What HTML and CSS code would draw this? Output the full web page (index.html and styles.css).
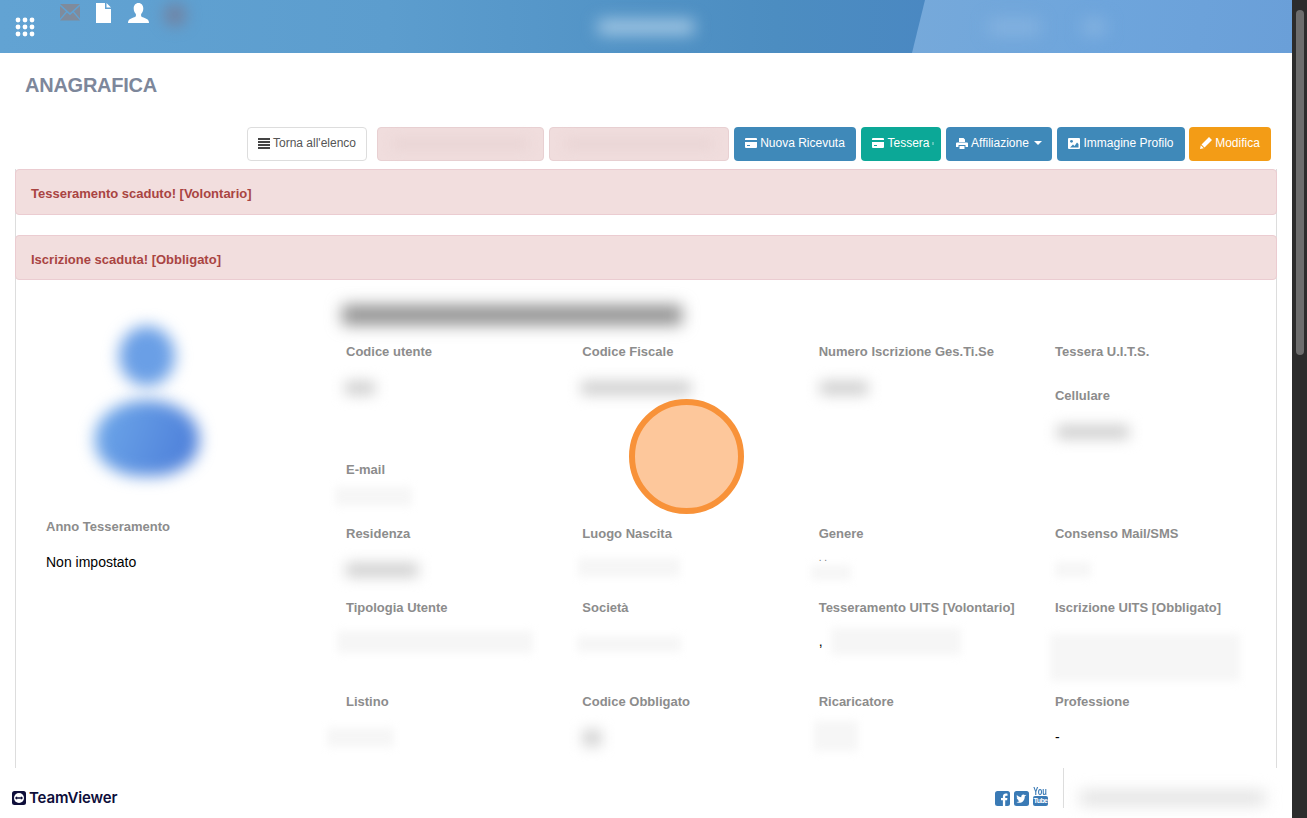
FILE: index.html
```html
<!DOCTYPE html>
<html lang="it">
<head>
  <meta charset="UTF-8">
  <title>Anagrafica</title>
  <link rel="stylesheet" href="styles.css">
</head>
<body>
  <div class="window">
    <div class="page">
      <header class="topbar">
        <div class="topbar-slant"></div>
        <svg class="apps" viewBox="0 0 20 20" width="20" height="20" fill="#fff">
          <circle cx="3" cy="3" r="2.400"/><circle cx="10" cy="3" r="2.400"/><circle cx="17" cy="3" r="2.400"/>
          <circle cx="3" cy="10" r="2.400"/><circle cx="10" cy="10" r="2.400"/><circle cx="17" cy="10" r="2.400"/>
          <circle cx="3" cy="17" r="2.400"/><circle cx="10" cy="17" r="2.400"/><circle cx="17" cy="17" r="2.400"/>
        </svg>
        <div class="topbar-icons">
          <svg viewBox="0 0 20 17" width="20" height="17" fill="#7f8b9c">
            <path d="M0 0h20L10 9z"/><path d="M0 2l6 5.500L0 14.500z"/><path d="M20 2l-6 5.500 6 7z"/><path d="M7 8.500l3 2.700 3-2.700 7 8H0z"/>
          </svg>
          <svg viewBox="0 0 15 20" width="15" height="20" fill="#fff">
            <path d="M0 0h9v6h6v14H0z"/><path d="M10.500 0L15 4.500h-4.500z"/>
          </svg>
          <svg class="icon-user" viewBox="0 0 21 20" width="21" height="20" fill="#fff">
            <path d="M10.500 0c3 0 4.800 2.400 4.800 5.500 0 2.300-1 4.300-2.200 5.500v2c0 1 4.500 2 6.500 3.500 1 .8 1.400 2 1.400 3.500H0c0-1.500.4-2.700 1.400-3.500 2-1.500 6.500-2.500 6.500-3.500v-2C6.700 9.800 5.700 7.800 5.700 5.500 5.700 2.400 7.500 0 10.500 0z"/>
          </svg>
          <span class="topbar-smudge"></span>
        </div>
        <span class="topbar-name"></span>
        <div class="topbar-user">
          <span class="user-a"></span>
          <span class="user-b"></span>
        </div>
      </header>

      <h1 class="page-title">ANAGRAFICA</h1>

      <div class="toolbar">
        <a class="btn btn-default">
          <svg viewBox="0 0 12 11" width="12" height="11" fill="#444"><path d="M0 0h12v2H0zM0 3h12v2H0zM0 6h12v2H0zM0 9h12v2H0z"/></svg>
          Torna all'elenco
        </a>
        <a class="btn btn-hidden btn-hidden-a"><span></span></a>
        <a class="btn btn-hidden btn-hidden-b"><span></span></a>
        <a class="btn btn-blue btn-ricevuta">
          <svg viewBox="0 0 12 10" width="12" height="10" fill="#fff"><path d="M1 0h10a1 1 0 0 1 1 1v1H0V1a1 1 0 0 1 1-1zM0 4h12v5a1 1 0 0 1-1 1H1a1 1 0 0 1-1-1zm2 3v1h3V7z"/></svg>
          Nuova Ricevuta
        </a>
        <a class="btn btn-teal">
          <svg viewBox="0 0 12 10" width="12" height="10" fill="#fff"><path d="M1 0h10a1 1 0 0 1 1 1v1H0V1a1 1 0 0 1 1-1zM0 4h12v5a1 1 0 0 1-1 1H1a1 1 0 0 1-1-1zm2 3v1h3V7z"/></svg>
          Tessera<i class="teal-dot"></i>
        </a>
        <a class="btn btn-blue btn-affiliazione">
          <svg viewBox="0 0 12 11" width="12" height="11" fill="#fff"><path d="M3 0h4.500L9 1.500V4H3zM1 4.500h10a1 1 0 0 1 1 1V9H9.500V7h-7v2H0V5.500a1 1 0 0 1 1-1zM3.500 8h5v3h-5z"/></svg>
          Affiliazione <i class="caret"></i>
        </a>
        <a class="btn btn-blue btn-immagine">
          <svg viewBox="0 0 12 11" width="12" height="11"><rect width="12" height="11" rx="1" fill="#fff"/><circle cx="3.500" cy="3.300" r="1.400" fill="#3f89b9"/><path d="M2 9.500l3-3 1.500 1.500L9 4.500l1.500 1.500v3.500z" fill="#3f89b9"/></svg>
          Immagine Profilo
        </a>
        <a class="btn btn-orange">
          <svg viewBox="0 0 12 12" width="12" height="12" fill="#fff"><path d="M9 0l3 3-7.500 7.500-3-3zM.8 8.200l3 3L0 12z"/></svg>
          Modifica
        </a>
      </div>

      <section class="panel">
        <div class="alert alert-first"><strong>Tesseramento scaduto! [Volontario]</strong></div>
        <div class="alert"><strong>Iscrizione scaduta! [Obbligato]</strong></div>

        <div class="detail">
          <div class="side">
            <div class="avatar">
              <span class="avatar-head"></span>
              <span class="avatar-body"></span>
            </div>
            <div class="label">Anno Tesseramento</div>
            <div class="side-value">Non impostato</div>
          </div>

          <div class="name-row"><span class="smudge name"></span></div>

          <div class="field"><div class="label">Codice utente</div><span class="smudge dark v-codice"></span></div>
          <div class="field"><div class="label">Codice Fiscale</div><span class="smudge dark v-cf"></span></div>
          <div class="field"><div class="label">Numero Iscrizione Ges.Ti.Se</div><span class="smudge dark v-numero"></span></div>
          <div class="field">
            <div class="label">Tessera U.I.T.S.</div>
            <div class="label label-next">Cellulare</div>
            <span class="smudge dark v-cellulare"></span>
          </div>

          <div class="field field-wide"><div class="label">E-mail</div><span class="smudge pale v-email"></span></div>

          <div class="field"><div class="label">Residenza</div><span class="smudge dark v-residenza"></span></div>
          <div class="field"><div class="label">Luogo Nascita</div><span class="smudge pale v-luogo"></span></div>
          <div class="field"><div class="label">Genere</div><div class="dots">. .</div><span class="smudge pale v-genere"></span></div>
          <div class="field"><div class="label">Consenso Mail/SMS</div><span class="smudge pale v-consenso"></span></div>

          <div class="field"><div class="label">Tipologia Utente</div><span class="smudge pale v-tipologia"></span></div>
          <div class="field"><div class="label">Società</div><span class="smudge pale v-societa"></span></div>
          <div class="field">
            <div class="label">Tesseramento UITS [Volontario]</div>
            <div class="comma-row"><span class="comma">,</span><span class="smudge pale v-tess"></span></div>
          </div>
          <div class="field"><div class="label">Iscrizione UITS [Obbligato]</div><span class="smudge pale v-iscr"></span></div>

          <div class="field"><div class="label">Listino</div><span class="smudge pale v-listino"></span></div>
          <div class="field"><div class="label">Codice Obbligato</div><span class="smudge dark v-obbl"></span></div>
          <div class="field"><div class="label">Ricaricatore</div><span class="smudge pale v-ricar"></span></div>
          <div class="field"><div class="label">Professione</div><div class="dash">-</div></div>
        </div>
      </section>

      <footer class="footer">
        <div class="tv-logo">
          <svg viewBox="0 0 14 14" width="14" height="14">
            <rect width="14" height="14" rx="2.500" fill="#0e0e3a"/>
            <circle cx="7" cy="7" r="5" fill="#fff"/>
            <path d="M2.800 7l2.300-1.700v1h3.800v-1L11.200 7 8.900 8.700v-1H5.100v1z" fill="#0e0e3a"/>
          </svg>
          <span>TeamViewer</span>
        </div>
        <div class="social">
          <svg viewBox="0 0 15 15" width="15" height="15">
            <rect width="15" height="15" rx="2.500" fill="#3a7ab5"/>
            <path d="M10.200 15V9.300h1.900l.3-2.200h-2.200V5.700c0-.6.200-1 1.100-1h1.200v-2c-.2 0-.9-.1-1.700-.1-1.700 0-2.900 1-2.900 2.900v1.600H6v2.200h1.900V15z" fill="#fff"/>
          </svg>
          <svg viewBox="0 0 15 15" width="15" height="15">
            <rect width="15" height="15" rx="2.500" fill="#3a7ab5"/>
            <path d="M12.500 4.600c-.4.200-.8.300-1.200.3.400-.3.800-.7.900-1.100-.4.200-.9.400-1.300.5a2.100 2.100 0 0 0-3.600 1.900C5.600 6.100 4 5.300 3 4c-.6 1-.3 2.200.6 2.800-.3 0-.6-.1-.9-.3 0 1 .7 1.900 1.700 2.100-.3.100-.6.100-.9 0 .3.900 1.100 1.400 2 1.500-.9.700-2 1-3 .9 3.100 2 8.300.6 8.300-5.700.3-.2.700-.5.700-.7z" fill="#fff"/>
          </svg>
          <div class="yt">
            <span class="yt-you">You</span>
            <span class="yt-tube">Tube</span>
          </div>
        </div>
        <div class="footer-rule"></div>
        <span class="footer-smudge"></span>
      </footer>

      <div class="click-mark"></div>
    </div>
    <div class="scrollbar"><div class="scrollbar-thumb"></div></div>
  </div>
</body>
</html>
```

FILE: styles.css
```css
* {
  box-sizing: border-box;
}
html, body {
  margin: 0;
  height: 100%;
  overflow: hidden;
}
body {
  font-family: "Liberation Sans", Arial, sans-serif;
  font-size: 14px;
  background-color: #fff;
  color: #000;
}
.window {
  display: flex;
  height: 818px;
}
.page {
  position: relative;
  flex: 1;
  overflow: hidden;
  background-color: #fff;
}

/* Scrollbar */
.scrollbar {
  width: 15px;
  padding: 10px 3px 0 4px;
  background-color: #2c2c2c;
}
.scrollbar-thumb {
  height: 345px;
  border-radius: 4px;
  background-color: #6d6d6d;
}

/* Top bar */
.topbar {
  position: relative;
  display: flex;
  height: 53px;
  overflow: hidden;
  background: linear-gradient(90deg, #62a3d3 0%, #5c9dce 30%, #4c8dc1 60%, #4a88c2 72%);
}
.topbar-slant {
  position: absolute;
  top: 0;
  right: 0;
  bottom: 0;
  left: 912px;
  clip-path: polygon(13px 0, 100% 0, 100% 100%, 0 100%);
  background: linear-gradient(100deg, #76a9da 0%, #6ea5dc 50%, #6a9fd8 100%);
}
.apps {
  margin: 17px 0 0 15px;
}
.topbar-icons {
  display: flex;
  gap: 16px;
  align-items: flex-start;
  margin: 3px 0 0 25px;
}
.topbar-icons svg:first-child {
  margin-top: 1px;
}
.icon-user {
  margin-left: 1px;
}
.topbar-smudge {
  width: 24px;
  height: 24px;
  margin-left: -2px;
  border-radius: 50%;
  background-color: #6f86a8;
  filter: blur(7px);
}
.topbar-name {
  position: absolute;
  top: 20px;
  left: 598px;
  width: 96px;
  height: 14px;
  background-color: #a8cbe6;
  filter: blur(8px);
}
.topbar-user {
  position: absolute;
  top: 19px;
  left: 988px;
  display: flex;
  gap: 42px;
}
.user-a, .user-b {
  height: 16px;
  background-color: #84b2e0;
  filter: blur(8px);
}
.user-a {
  width: 52px;
}
.user-b {
  width: 24px;
}

/* Title */
.page-title {
  margin: 20px 0 0 25px;
  font-size: 20px;
  line-height: 24px;
  font-weight: bold;
  letter-spacing: -0.25px;
  color: #7d879b;
}

/* Buttons */
.toolbar {
  display: flex;
  justify-content: flex-end;
  height: 34px;
  margin: 30px 21px 8px 0;
}
.btn {
  display: flex;
  gap: 3px;
  align-items: center;
  justify-content: center;
  height: 34px;
  margin-left: 5px;
  padding-bottom: 2px;
  border: 1px solid transparent;
  border-radius: 4px;
  font-size: 12px;
  color: #fff;
  white-space: nowrap;
}
.btn-default {
  width: 120px;
  margin-right: 5px;
  border-color: #ddd;
  color: #555;
}
.btn-hidden {
  padding-bottom: 0;
  border-color: #e8d0d2;
  background-color: #f0dddd;
}
.btn-hidden span {
  width: 82%;
  height: 10px;
  background-color: #e8d4d4;
  filter: blur(6px);
}
.btn-hidden-a {
  width: 167px;
}
.btn-hidden-b {
  width: 180px;
}
.btn-blue {
  background-color: #3f89b9;
}
.btn-ricevuta {
  width: 122px;
}
.btn-affiliazione {
  width: 106px;
}
.btn-immagine {
  width: 128px;
}
.btn-teal {
  width: 80px;
  padding-left: 4px;
  background-color: #0ca897;
}
.teal-dot {
  width: 2px;
  height: 3px;
  margin-left: -1px;
  background-color: #5cc4b8;
}
.btn-orange {
  width: 82px;
  margin-left: 4px;
  background-color: #f39c16;
}
.caret {
  width: 0;
  height: 0;
  margin-left: 2px;
  border-top: 4px solid #fff;
  border-right: 4px solid transparent;
  border-left: 4px solid transparent;
}

/* Panel and alerts */
.panel {
  height: 700px;
  margin: 0 15px;
  border-right: 1px solid #ddd;
  border-left: 1px solid #ddd;
}
.alert {
  height: 45px;
  margin: 0 -1px;
  padding: 0 15px;
  border: 1px solid #ebccd1;
  border-radius: 4px;
  background-color: #f2dede;
  font-size: 13px;
  line-height: 46px;
  color: #a94442;
}
.alert strong {
  display: block;
  padding-top: 1px;
}
.alert-first {
  height: 46px;
  margin-bottom: 20px;
}

/* Detail grid */
.detail {
  display: grid;
  grid-template-columns: 330px 236.33px 236.33px 236.33px 1fr;
  grid-template-rows: 61px 118px 64px 74px 94px 80px;
}
.side {
  grid-column: 1;
  grid-row: 1 / span 6;
  padding: 40px 0 0 30px;
}
.avatar {
  display: flex;
  flex-direction: column;
  align-items: center;
  width: 202px;
  height: 196px;
}
.avatar-head {
  width: 56px;
  height: 60px;
  margin-top: 6px;
  border-radius: 50%;
  background-color: #6a9fe6;
  filter: blur(8px);
}
.avatar-body {
  width: 104px;
  height: 76px;
  margin-top: 14px;
  border-radius: 50% 50% 45% 45%;
  background: linear-gradient(110deg, #6fa9ea, #4a7bd8);
  filter: blur(8px);
}
.side-value {
  margin-top: 16px;
  line-height: 20px;
}
.label {
  margin-bottom: -1px;
  padding-top: 1px;
  font-size: 13px;
  line-height: 20px;
  font-weight: bold;
  color: #8c8c8c;
}
.label-next {
  margin-top: 24px;
}
.name-row {
  grid-column: 2 / span 4;
}
.field-wide {
  grid-column: 2 / span 4;
}
.smudge {
  display: block;
}
.smudge.dark {
  background-color: #cfcfcf;
  filter: blur(7px);
}
.smudge.pale {
  background-color: #f6f6f6;
  filter: blur(4px);
}
.name {
  width: 340px;
  height: 20px;
  margin: 25px 0 0 -4px;
  background-color: #909090;
  filter: blur(8px);
}
.v-codice {
  width: 30px;
  height: 14px;
  margin-top: 20px;
  margin-left: -1px;
}
.v-cf {
  width: 110px;
  height: 14px;
  margin-top: 20px;
  margin-left: -1px;
}
.v-numero {
  width: 48px;
  height: 14px;
  margin-top: 20px;
  margin-left: 1px;
}
.v-cellulare {
  width: 72px;
  height: 14px;
  margin-top: 20px;
  margin-left: 2px;
}
.v-email {
  width: 77px;
  height: 19px;
  margin-top: 8px;
  margin-left: -11px;
}
.v-residenza {
  width: 72px;
  height: 14px;
  margin-top: 20px;
  margin-left: 0;
}
.v-luogo {
  width: 102px;
  height: 19px;
  margin-top: 15px;
  margin-left: -4px;
}
.dots {
  height: 8px;
  margin-top: 11px;
  font-size: 10px;
  line-height: 8px;
  color: #666;
}
.v-genere {
  width: 40px;
  height: 15px;
  margin-top: 3px;
  margin-left: -8px;
}
.v-consenso {
  width: 36px;
  height: 15px;
  margin-top: 19px;
}
.v-tipologia {
  width: 196px;
  height: 22px;
  margin-top: 14px;
  margin-left: -9px;
}
.v-societa {
  width: 104px;
  height: 16px;
  margin-top: 19px;
  margin-left: -5px;
}
.comma-row {
  display: flex;
  margin-top: 11px;
}
.comma {
  width: 12px;
  font-size: 14px;
  line-height: 27px;
}
.v-tess {
  width: 130px;
  height: 27px;
}
.v-iscr {
  width: 190px;
  height: 47px;
  margin-top: 17px;
  margin-left: -5px;
}
.v-listino {
  width: 67px;
  height: 19px;
  margin-top: 17px;
  margin-left: -19px;
}
.v-obbl {
  width: 18px;
  height: 16px;
  margin-top: 19px;
  margin-left: 1px;
}
.v-ricar {
  width: 44px;
  height: 30px;
  margin-top: 10px;
  margin-left: -5px;
}
.dash {
  margin-top: 16px;
  font-size: 14px;
  line-height: 20px;
}

/* Footer lies over the panel */
.footer {
  position: absolute;
  right: 0;
  bottom: 0;
  left: 0;
  display: flex;
  align-items: flex-start;
  height: 50px;
  background-color: #fff;
}
.tv-logo {
  display: flex;
  gap: 3px;
  align-items: center;
  margin: 23px 0 0 12px;
  font-family: Inter, sans-serif;
  font-size: 15px;
  line-height: 14px;
  font-weight: 600;
  letter-spacing: -0.15px;
  color: #0e0e3a;
}
.social {
  display: flex;
  gap: 4px;
  align-items: flex-end;
  height: 29px;
  margin: 9px 0 0 auto;
}
.yt {
  display: flex;
  flex-direction: column;
  align-items: center;
  width: 15px;
  font-weight: bold;
}
.yt-you {
  font-size: 10px;
  line-height: 9px;
  color: #3a7ab5;
  transform: scaleX(0.75);
}
.yt-tube {
  width: 15px;
  height: 10px;
  border-radius: 2px;
  background-color: #3a7ab5;
  font-size: 7px;
  line-height: 10px;
  letter-spacing: -0.6px;
  text-align: center;
  color: #fff;
  white-space: nowrap;
}
.footer-rule {
  width: 1px;
  height: 40px;
  margin: 0 16px 0 15px;
  background-color: #ddd;
}
.footer-smudge {
  width: 185px;
  height: 12px;
  margin: 24px 27px 0 0;
  background-color: #dcdcdc;
  filter: blur(8px);
}

/* Click marker */
.click-mark {
  position: absolute;
  top: 399px;
  left: 629px;
  width: 115px;
  height: 115px;
  border: 6px solid #f89239;
  border-radius: 50%;
  background-color: #fdc79b;
}
```
